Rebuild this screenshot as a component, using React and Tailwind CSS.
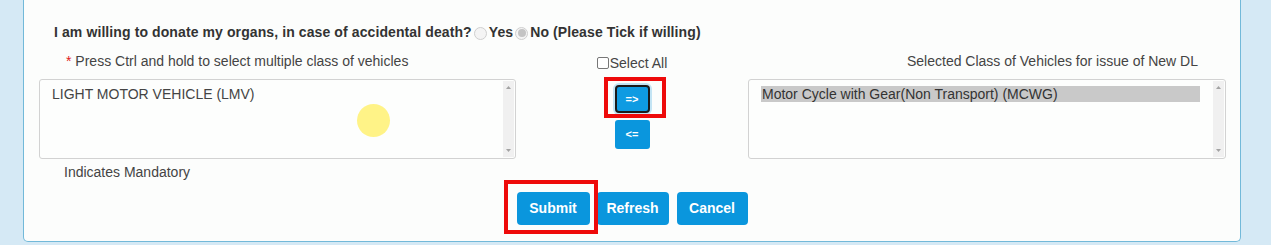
import React from 'react';

const font = { fontFamily: '"Liberation Sans", Arial, sans-serif' };

const Radio = ({ checked }) => (
  <span className="inline-flex w-[13px] h-[13px] rounded-full border border-[#cfcfcf] bg-[#f4f4f4] items-center justify-center mx-[2px] relative top-[1px]">
    {checked && <span className="w-[8px] h-[8px] rounded-full bg-[#c4c4c4]"></span>}
  </span>
);

const Scrollbar = () => (
  <div className="w-[11px] my-[1px] mr-[1px] bg-[#f0f0f0] flex flex-col justify-between items-center py-[5px]">
    <svg width="5" height="3" viewBox="0 0 5 3"><polygon points="2.5,0 5,3 0,3" fill="#a3a3a3" /></svg>
    <svg width="5" height="3" viewBox="0 0 5 3"><polygon points="0,0 5,0 2.5,3" fill="#a3a3a3" /></svg>
  </div>
);

const ListBox = ({ children, overlay }) => (
  <div className="relative h-[80px] border border-[#d2d2d2] rounded-[3px] bg-[#fdfefd] flex">
    <div className="flex-1 pl-[12px] pt-[6px] text-[14px] leading-[16px] text-[#444]">{children}</div>
    <Scrollbar />
    {overlay}
  </div>
);

const RedBox = ({ className }) => (
  <div className={`absolute border-[4px] border-[#ee0a0a] pointer-events-none ${className}`}></div>
);

export default function App() {
  return (
    <div className="w-[1271px] h-[245px] bg-[#d5e9f5] overflow-hidden" style={font}>
      <div className="ml-[23px] w-[1218px] h-[242px] bg-[#fcfdfc] border-x border-b border-[#72b9d9] rounded-b-[5px]">
        <div className="pt-[24px] pl-[30px] text-[14px] leading-[16px] font-bold tracking-[0.1px] text-[#333] flex items-center">
          <span>I am willing to donate my organs, in case of accidental death?</span>
          <Radio />
          <span>Yes</span>
          <Radio checked />
          <span>No (Please Tick if willing)</span>
        </div>

        <div className="pl-[15px] mt-[13px] grid grid-cols-[477px_232px_478px] text-[14px] leading-[16px] text-[#444]">
          <div className="pl-[27px]">
            <span className="text-[#e02020]">*</span> Press Ctrl and hold to select multiple class of vehicles
          </div>
          <div className="flex justify-center items-center relative top-[2px]">
            <span className="w-[12px] h-[12px] border border-[#777] rounded-[2px] bg-white mr-[1px]"></span>
            <span>Select All</span>
          </div>
          <div className="text-right pr-[28px]">Selected Class of Vehicles for issue of New DL</div>

          <div className="mt-[10px]">
            <ListBox
              overlay={
                <div className="absolute left-[317px] top-[24px] w-[33px] h-[33px] rounded-full bg-[#fff27a] opacity-90"></div>
              }
            >
              LIGHT MOTOR VEHICLE (LMV)
            </ListBox>
          </div>
          <div className="mt-[10px] flex flex-col items-center pt-[6px] gap-[7px]">
            <div className="relative">
              <button className="w-[35px] h-[28px] rounded-[4px] bg-[#0e9be2] border-2 border-[#1a1a1a] ring-2 ring-[#c3e4f4] text-white font-bold text-[11px] leading-none">
                =&gt;
              </button>
              <RedBox className="-left-[11px] -top-[8px] w-[62px] h-[41px]" />
            </div>
            <button className="w-[35px] h-[29px] rounded-[3px] bg-[#0a96dd] text-white font-bold text-[11px] leading-none">
              &lt;=
            </button>
          </div>
          <div className="mt-[10px]">
            <ListBox>
              <div className="bg-[#c9c9c9] mr-[13px] pl-[1px] text-[#333]">Motor Cycle with Gear(Non Transport) (MCWG)</div>
            </ListBox>
          </div>
        </div>

        <div className="pl-[40px] mt-[5px] text-[14px] leading-[16px] text-[#444]">Indicates Mandatory</div>

        <div className="mt-[12px] flex justify-center gap-[7px]">
          <div className="relative">
            <button className="w-[73px] h-[33px] rounded-[4px] bg-[#0a96dd] text-white font-bold text-[14px]">Submit</button>
            <RedBox className="-left-[13px] -top-[12px] w-[94px] h-[54px]" />
          </div>
          <button className="w-[72px] h-[33px] rounded-[4px] bg-[#0a96dd] text-white font-bold text-[14px]">Refresh</button>
          <button className="w-[71px] h-[33px] rounded-[4px] bg-[#0a96dd] text-white font-bold text-[14px] ml-[1px]">Cancel</button>
        </div>
      </div>
    </div>
  );
}
